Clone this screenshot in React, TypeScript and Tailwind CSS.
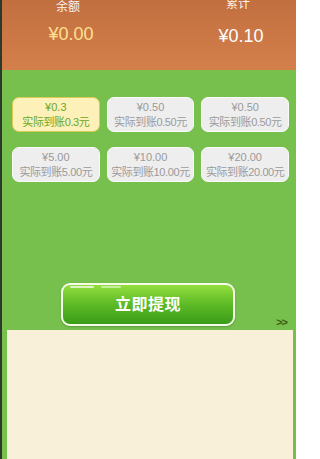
const cards = [
  { price: "¥0.3", real: "实际到账0.3元", active: true },
  { price: "¥0.50", real: "实际到账0.50元" },
  { price: "¥0.50", real: "实际到账0.50元" },
  { price: "¥5.00", real: "实际到账5.00元" },
  { price: "¥10.00", real: "实际到账10.00元" },
  { price: "¥20.00", real: "实际到账20.00元" },
];

const font = { fontFamily: '"Liberation Sans", "Noto Sans CJK SC", sans-serif' };

export default function App() {
  return (
    <div
      className="w-[296px] h-[459px] overflow-hidden flex bg-[#77c04d]"
      style={font}
    >
      {/* dark strip at the left edge */}
      <div className="w-[2px] shrink-0 bg-[#2c3a2c]" />

      <div className="flex-1 flex flex-col">
        {/* ================= BALANCE HEADER ================= */}
        <div className="h-[70px] shrink-0 flex bg-gradient-to-b from-[#c26f40] to-[#d4804b] text-white">
          <div className="w-[132px] flex flex-col items-center">
            <p className="text-[12px] leading-none pt-[1px] opacity-90">余额</p>
            <p className="text-[18px] leading-none mt-[12px] pl-[6px] text-[#ffe08f]">¥0.00</p>
          </div>
          <div className="flex-1 flex flex-col items-center pl-[46px]">
            <p className="text-[12px] leading-none -mt-[2px] opacity-90">累计</p>
            <p className="text-[18px] leading-none mt-[17px] pl-[6px]">¥0.10</p>
          </div>
        </div>

        {/* ================= AMOUNT OPTIONS ================= */}
        <div className="grid grid-cols-3 gap-x-[7px] gap-y-[15px] pl-[10px] pr-[7px] pt-[27px]">
          {cards.map((card, idx) => (
            <div
              key={idx}
              className={`h-[35px] rounded-[7px] border flex flex-col items-center justify-center text-[11px] leading-[15px] ${
                card.active
                  ? "bg-[#fdf0b8] border-[#d8cc58] text-[#6aa824]"
                  : "bg-[#eeeeef] border-[#fafafa] text-[#9a9a9a]"
              }`}
            >
              <p>{card.price}</p>
              <p className="whitespace-nowrap tracking-[-0.4px]">{card.real}</p>
            </div>
          ))}
        </div>

        {/* ================= WITHDRAW BUTTON ================= */}
        <div className="relative flex justify-center mt-[101px] pr-[2px]">
          <button className="relative w-[174px] h-[43px] rounded-[9px] border-2 border-[#f4fbe8] bg-gradient-to-b from-[#93de3e] via-[#5cba25] to-[#3a9c18] text-white text-[16px] font-bold tracking-[0.5px] shadow-[0_1px_2px_rgba(0,0,0,0.2)]">
            <span className="absolute left-[7px] top-[1px] h-[2px] w-[24px] rounded-full bg-white/70" />
            <span className="absolute left-[38px] top-[1px] h-[2px] w-[20px] rounded-full bg-white/50" />
            立即提现
          </button>
          <span className="absolute right-[9px] bottom-[-4px] text-[11px] font-bold text-[#3d5c12] tracking-[-1px]">
            &gt;&gt;
          </span>
        </div>

        {/* ================= BOTTOM PANEL ================= */}
        <div className="flex-1 mt-[4px] ml-[5px] mr-[3px] bg-[#f8f0d8]" />
      </div>
    </div>
  );
}
